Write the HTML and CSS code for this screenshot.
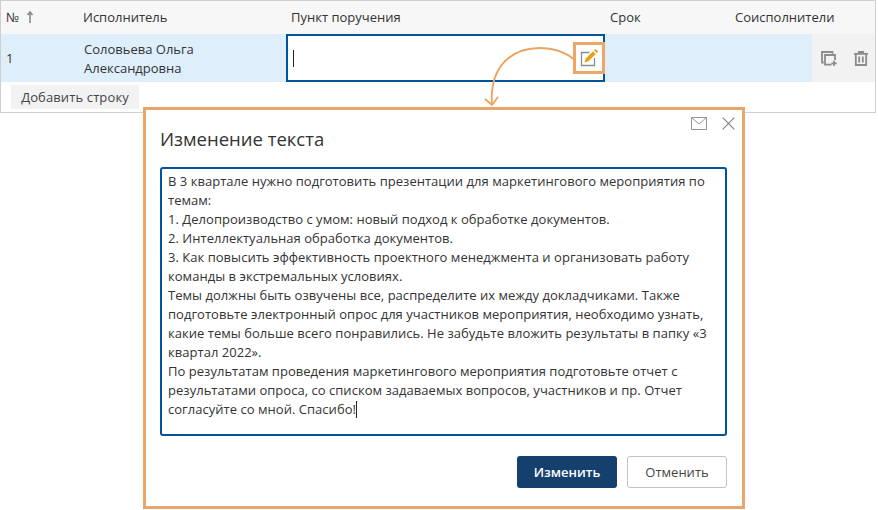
FILE: index.html
```html
<!DOCTYPE html>
<html lang="ru">
<head>
<meta charset="utf-8">
<title>Изменение текста</title>
<link rel="stylesheet" href="styles.css">
</head>
<body>
<div class="page">
  <section class="table">
    <div class="row head">
      <div class="c-num">№ <svg class="sort" width="8" height="12" viewBox="0 0 8 12"><path d="M4 12V2M1.500 4L4 1l2.500 3" fill="none" stroke="#8a8a8a" stroke-width="1.600"/></svg></div>
      <div class="c-name">Исполнитель</div>
      <div class="c-item">Пункт поручения</div>
      <div class="c-date">Срок</div>
      <div class="c-co">Соисполнители</div>
    </div>
    <div class="row body">
      <div class="num-val">1</div>
      <div class="name-val">Соловьева Ольга<br>Александровна</div>
      <div class="editor">
        <span class="caret"></span>
        <span class="edit-btn">
          <svg width="20" height="20" viewBox="0 0 20 20">
            <path d="M15.500 10v7.500h-13v-13h8" fill="none" stroke="#8c8c8c" stroke-width="1.300"/>
            <path d="M5.500 14.500l1.200-4L14 3.200l2.800 2.800-7.300 7.300z" fill="#e0a416"/>
            <path d="M14.900 2.300l.9-.9a1 1 0 0 1 1.300 0l1.500 1.500a1 1 0 0 1 0 1.300l-.9.9z" fill="#e0a416"/>
          </svg>
        </span>
      </div>
      <div class="spacer"></div>
      <div class="actions">
        <svg width="16" height="15" viewBox="0 0 16 15">
          <path d="M2.800 11.500H1V1h10.500v1.800M10.500 13.700H4V4h10v5" fill="none" stroke="#8c8c8c" stroke-width="1.800"/>
          <path d="M13 9.800v5.200M10.400 12.400h5.400" fill="none" stroke="#8c8c8c" stroke-width="1.700"/>
        </svg>
        <svg width="14" height="15" viewBox="0 0 14 15">
          <path d="M0 2.800h14M4.800 2.800V1h4.400v1.800M1.800 3v11h10.400V3M5.200 5.500v6M8.800 5.500v6" fill="none" stroke="#8c8c8c" stroke-width="1.800"/>
        </svg>
      </div>
    </div>
    <div class="foot"><button class="add">Добавить строку</button></div>
  </section>

  <svg class="arrow" width="100" height="60" viewBox="0 0 100 60">
    <path d="M97 13C85 3 72 1 62 1 35 1 11 18 14 58" fill="none" stroke="#f0a25c" stroke-width="1.800"/>
    <path d="M7 52l7 6 6-8" fill="none" stroke="#f0a25c" stroke-width="1.800"/>
  </svg>

  <section class="modal">
    <div class="tools">
      <svg width="16" height="13" viewBox="0 0 16 13"><path d="M.5.500h15v12H.500zM.500.500L8 7l7.500-6.500" fill="none" stroke="#8f979d"/></svg>
      <svg width="13" height="13" viewBox="0 0 13 13"><path d="M.7.700l11.600 11.600M12.300.700L.7 12.300" fill="none" stroke="#7f878d" stroke-width="1.200"/></svg>
    </div>
    <h1 class="title">Изменение текста</h1>
    <div class="area">В 3 квартале нужно подготовить презентации для маркетингового мероприятия по<br>темам:<br>1. Делопроизводство с умом: новый подход к обработке документов.<br>2. Интеллектуальная обработка документов.<br>3. Как повысить эффективность проектного менеджмента и организовать работу<br>команды в экстремальных условиях.<br>Темы должны быть озвучены все, распределите их между докладчиками. Также<br>подготовьте электронный опрос для участников мероприятия, необходимо узнать,<br>какие темы больше всего понравились. Не забудьте вложить результаты в папку «3<br>квартал 2022».<br>По результатам проведения маркетингового мероприятия подготовьте отчет с<br>результатами опроса, со списком задаваемых вопросов, участников и пр. Отчет<br>согласуйте со мной. Спасибо!<span class="caret-inline"></span></div>
    <div class="buttons">
      <button class="btn primary">Изменить</button>
      <button class="btn">Отменить</button>
    </div>
  </section>
</div>
</body>
</html>
```
FILE: styles.css
```css
* { box-sizing: border-box; }
html, body { margin: 0; padding: 0; background: #fff; }
body { font-family: "Open Sans", "Noto Sans", sans-serif; font-size: 13px; color: #333; }
.page { position: relative; width: 878px; height: 510px; overflow: hidden; }

.table { width: 876px; height: 113px; border: 1px solid #cfcfcf; }
.row.head { display: grid; grid-template-columns: 81px 208px 319px 125px 141px; height: 33px; padding-bottom: 2px; background: #f7f7f7; align-items: center; }
.head > div { padding-left: 1px; }
.head .c-num { padding-left: 5px; display: flex; align-items: center; gap: 7px; }
.sort { display: block; }
.row.body { display: grid; grid-template-columns: 82px 203px 319px 207px 63px; height: 48px; background: #dfeefb; }
.num-val { padding: 15px 0 0 5px; }
.name-val { padding: 6px 0 0 1px; line-height: 19px; }
.editor { border: 2px solid #00529c; background: #fff; display: flex; align-items: center; justify-content: space-between; padding-left: 5px; }
.caret { width: 1px; height: 17px; background: #222; }
.edit-btn { width: 32px; height: 32px; border: 3px solid #eea666; background: #fff; margin: 0 -2px 0 0; display: flex; align-items: center; justify-content: center; }
.actions { background: #f2f2f2; display: flex; align-items: center; gap: 17px; padding-left: 9px; }
.foot { padding: 3px 0 0 10px; }
.add { height: 24px; width: 128px; padding: 0; border: 0; background: #f2f2f2; font: inherit; letter-spacing: .12px; color: #444; display: block; }

.arrow { position: absolute; left: 478px; top: 47px; }

.modal { position: absolute; left: 143px; top: 107px; width: 602px; height: 402px; border: 3px solid #e8a56c; background: #fff; padding: 0 15px 0 14px; display: flex; flex-direction: column; }
.tools { position: absolute; top: 7px; right: 7px; display: flex; align-items: center; gap: 15px; }
.title { margin: 15px 0 0; font-size: 18.500px; font-weight: 400; line-height: 28px; color: #333; }
.area { margin-top: 14px; height: 269px; border: 2px solid #00529c; border-radius: 3px; padding: 3px 6px; line-height: 19px; letter-spacing: .03px; white-space: nowrap; }
.caret-inline { display: inline-block; width: 1px; height: 17px; background: #222; vertical-align: -4px; }
.buttons { display: flex; justify-content: flex-end; gap: 10px; margin-top: 20px; }
.btn { width: 100px; height: 32px; padding: 0; border: 1px solid #c4c4c4; border-radius: 3px; background: #fff; font: inherit; color: #444; }
.btn.primary { border: 0; background: #15406e; color: #fff; font-weight: 600; }
```
